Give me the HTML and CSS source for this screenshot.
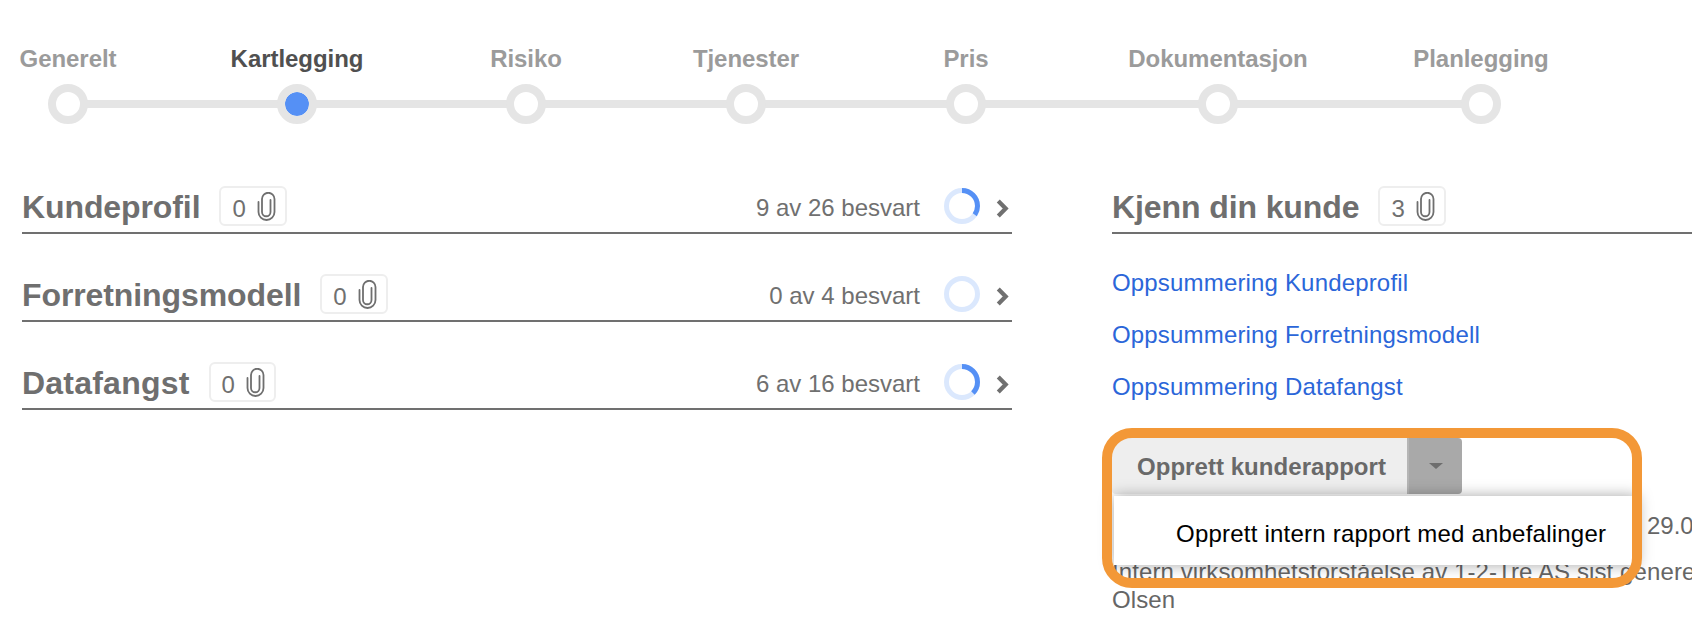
FILE: index.html
```html
<!DOCTYPE html>
<html lang="no">
<head>
<meta charset="utf-8">
<title>Kartlegging</title>
<link rel="stylesheet" href="styles.css">
</head>
<body>
<svg class="defs" width="0" height="0" aria-hidden="true">
  <defs>
    <symbol id="clip" viewBox="0 0 19 29">
      <path d="M1.5 10V20a8 8 0 0 0 16 0V7a6.25 6.25 0 0 0-12.5 0V20a4.25 4.25 0 0 0 8.5 0V8" fill="none" stroke="currentColor" stroke-width="1.8" stroke-linecap="round"/>
    </symbol>
    <symbol id="chev" viewBox="0 0 12 18">
      <path d="M2 2l7 7-7 7" fill="none" stroke="currentColor" stroke-width="4"/>
    </symbol>
  </defs>
</svg>

<nav class="stepper">
  <div class="rail"></div>
  <div class="step"><span class="step-label">Generelt</span><span class="dot"></span></div>
  <div class="step gap-229 active"><span class="step-label">Kartlegging</span><span class="dot"></span></div>
  <div class="step gap-229"><span class="step-label">Risiko</span><span class="dot"></span></div>
  <div class="step gap-220"><span class="step-label">Tjenester</span><span class="dot"></span></div>
  <div class="step gap-220"><span class="step-label">Pris</span><span class="dot"></span></div>
  <div class="step gap-252"><span class="step-label">Dokumentasjon</span><span class="dot"></span></div>
  <div class="step gap-264"><span class="step-label">Planlegging</span><span class="dot"></span></div>
</nav>

<main class="columns">
  <section class="left">
    <div class="row">
      <h2 class="title">Kundeprofil</h2>
      <span class="badge">0<svg class="clip"><use href="#clip"/></svg></span>
      <span class="status">9 av 26 besvart</span>
      <svg class="donut" viewBox="0 0 36 36"><circle class="donut-bg" cx="18" cy="18" r="15.5"/><circle class="donut-fg" cx="18" cy="18" r="15.5" pathLength="100" stroke-dasharray="34.6 100" transform="rotate(-90 18 18)"/></svg>
      <svg class="chev"><use href="#chev"/></svg>
    </div>
    <div class="row">
      <h2 class="title">Forretningsmodell</h2>
      <span class="badge">0<svg class="clip"><use href="#clip"/></svg></span>
      <span class="status">0 av 4 besvart</span>
      <svg class="donut" viewBox="0 0 36 36"><circle class="donut-bg" cx="18" cy="18" r="15.5"/></svg>
      <svg class="chev"><use href="#chev"/></svg>
    </div>
    <div class="row">
      <h2 class="title title-open">Datafangst</h2>
      <span class="badge">0<svg class="clip"><use href="#clip"/></svg></span>
      <span class="status">6 av 16 besvart</span>
      <svg class="donut" viewBox="0 0 36 36"><circle class="donut-bg" cx="18" cy="18" r="15.5"/><circle class="donut-fg" cx="18" cy="18" r="15.5" pathLength="100" stroke-dasharray="37.5 100" transform="rotate(-90 18 18)"/></svg>
      <svg class="chev"><use href="#chev"/></svg>
    </div>
  </section>

  <section class="right">
    <div class="row">
      <h2 class="title">Kjenn din kunde</h2>
      <span class="badge">3<svg class="clip"><use href="#clip"/></svg></span>
    </div>
    <ul class="links">
      <li><a href="#">Oppsummering Kundeprofil</a></li>
      <li><a href="#">Oppsummering Forretningsmodell</a></li>
      <li><a href="#">Oppsummering Datafangst</a></li>
    </ul>
    <div class="split">
      <button class="split-main" type="button">Opprett kunderapport</button>
      <button class="split-caret" type="button" aria-label="Flere valg"><span class="caret"></span></button>
      <div class="menu"><a class="menu-item" href="#">Opprett intern rapport med anbefalinger</a></div>
      <div class="highlight"></div>
    </div>
    <p class="note note-date">29.0</p>
    <p class="note note-intern">Intern virksomhetsforståelse av 1-2-Tre AS sist generert<br>Olsen</p>
  </section>
</main>
</body>
</html>
```

FILE: styles.css
```css
* { box-sizing: border-box; }
html, body { margin: 0; height: 100%; overflow: hidden; background: #fff; }
body { font-family: "Liberation Sans", Arial, sans-serif; color: #707070; width: 1692px; height: 630px; }
.defs { position: absolute; }

.stepper { position: relative; display: flex; align-items: flex-start; padding: 45px 0 0 20px; }
.rail { position: absolute; left: 68px; top: 100px; width: 1412px; height: 8px; background: #e5e5e5; }
.step { position: relative; width: 96px; flex: none; display: flex; flex-direction: column; align-items: center; }
.gap-229 { margin-left: 133px; }
.gap-220 { margin-left: 124px; }
.gap-252 { margin-left: 156px; }
.gap-264 { margin-left: 167px; }
.step-label { font-size: 24px; line-height: 28px; font-weight: 700; color: #9b9b9b; white-space: nowrap; letter-spacing: -.05px; }
.dot { margin-top: 11px; width: 40px; height: 40px; border-radius: 50%; border: 8px solid #e5e5e5; background: #fff; }
.active .step-label { color: #505050; }
.active .dot { background: #5590f5; background-clip: padding-box; }

.columns { display: flex; align-items: flex-start; gap: 100px; padding: 62px 0 0 22px; }
.left { width: 990px; flex: none; }
.right { width: 620px; flex: none; position: relative; }

.row { display: flex; align-items: center; height: 48px; padding-bottom: 6px; border-bottom: 2px solid #707070; margin-bottom: 40px; }
.right .row { margin-bottom: 0; }
.title { margin: 0; padding-top: 2px; font-size: 32px; line-height: 40px; font-weight: 700; color: #6f6f6f; white-space: nowrap; letter-spacing: -.1px; }
.title-open { letter-spacing: .22px; }
.badge { display: inline-flex; align-items: center; height: 40px; margin-left: 19px; padding: 5px 9px 0 11px; gap: 11px; border: 2px solid #eeeeee; border-radius: 6px; font-size: 24px; color: #707070; }
.clip { width: 19px; height: 29px; margin-top: -5px; color: #6f6f6f; }
.status { margin-left: auto; padding-top: 4px; font-size: 24px; color: #707070; white-space: nowrap; }
.donut { width: 36px; height: 36px; margin-left: 24px; flex: none; }
.donut-bg, .donut-fg { fill: none; stroke-width: 5; }
.donut-bg { stroke: #dbe8fd; }
.donut-fg { stroke: #5590f5; }
.chev { width: 13px; height: 19px; margin-top: 4px; margin-left: 16px; margin-right: 3px; color: #707070; flex: none; }

.links { list-style: none; margin: 23px 0 25px; padding: 0; }
.links li { height: 52px; line-height: 52px; font-size: 24px; letter-spacing: .17px; }
.links a { color: #2b66d9; text-decoration: none; }

.split { position: relative; display: flex; height: 56px; width: 350px; }
.split button { border: 0; margin: 0; padding: 0; font-family: inherit; }
.split-main { width: 295px; padding: 2px 0 0 4px !important; background: #eeeeee; color: #696969; font-size: 24px; font-weight: 700; letter-spacing: .05px; border-radius: 4px 0 0 4px; }
.split-caret { width: 55px; background: #a9a9a9; border-radius: 0 4px 4px 0; display: flex; align-items: center; justify-content: center; border-left: 2px solid #b5b5b5 !important; }
.caret { width: 0; height: 0; border-style: solid; border-width: 6px 7px 0; border-color: #6e6e6e transparent transparent; }

.menu { position: absolute; left: 2px; top: 58px; width: 524px; height: 69px; background: #fff; display: flex; align-items: center; padding: 6px 0 0 62px; box-shadow: 0 0 14px rgba(0, 0, 0, .35); z-index: 2; }
.menu-item { color: #000; text-decoration: none; font-size: 24px; white-space: nowrap; letter-spacing: .22px; }
.highlight { position: absolute; left: -10px; top: -10px; width: 540px; height: 160px; border: 10px solid #f39837; border-radius: 30px; z-index: 3; pointer-events: none; }

.note { margin: 0; font-size: 24px; line-height: 28px; color: #666666; white-space: nowrap; }
.note-date { margin-top: 18px; padding-left: 535px; }
.note-intern { margin-top: 18px; letter-spacing: .1px; }
```
